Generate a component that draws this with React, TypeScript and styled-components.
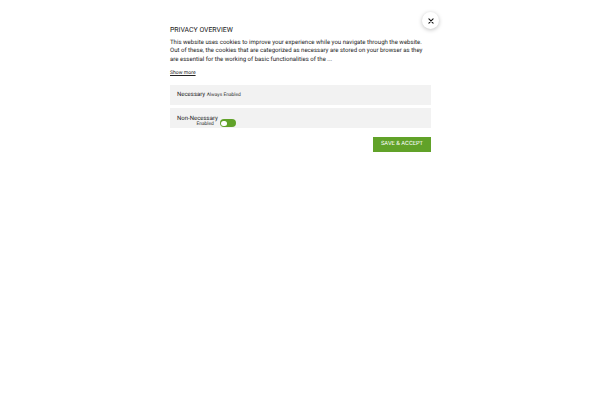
import React from "react";
import styled, { createGlobalStyle } from "styled-components";

const Global = createGlobalStyle`
  html, body { margin: 0; padding: 0; background: #ffffff; }
  body {
    font-family: Roboto, "Liberation Sans", Arial, sans-serif;
    color: #000;
    text-rendering: geometricPrecision;
  }
`;

const Modal = styled.div`
  position: relative;
  width: 261px;
  margin-left: 170px;
  padding-top: 25px;
  display: flex;
  flex-direction: column;
`;

const CloseButton = styled.button`
  position: absolute;
  top: 12px;
  right: -8px;
  width: 17px;
  height: 17px;
  border-radius: 50%;
  border: none;
  background: #ffffff;
  box-shadow: 0 1px 4px rgba(0, 0, 0, 0.25);
  display: flex;
  align-items: center;
  justify-content: center;
  padding: 0;
  cursor: pointer;
`;

const Title = styled.h4`
  margin: 0;
  font-size: 6.9px;
  font-weight: 400;
  line-height: 10px;
  color: #222;
`;

const Body = styled.p`
  margin: 4px 0 0;
  font-size: 6.05px;
  line-height: 8.3px;
  color: #1a1a1a;
`;

const ShowMore = styled.a`
  display: block;
  margin-top: 5px;
  font-size: 5.1px;
  line-height: 8px;
  color: #222;
  text-decoration: underline;
`;

const Row = styled.div<{ $gap?: number }>`
  margin-top: ${(p) => p.$gap ?? 3}px;
  height: 20px;
  background: #f2f2f2;
  display: flex;
  align-items: center;
  padding: 0 7px;
  box-sizing: border-box;
`;

const RowTitle = styled.span`
  font-size: 6px;
  color: #222;
`;

const Small = styled.span`
  font-size: 4.9px;
  color: #333;
  margin-left: 1.5px;
`;

const NonNecWrap = styled.div`
  display: flex;
  align-items: flex-end;
  align-self: flex-end;
  height: 100%;
`;

const Stack = styled.div`
  display: flex;
  flex-direction: column;
  align-items: flex-end;
  padding-bottom: 1px;
`;

const StackTitle = styled.span`
  font-size: 6px;
  line-height: 6px;
  color: #222;
`;

const StackSub = styled.span`
  font-size: 4.9px;
  line-height: 5px;
  color: #333;
  margin-right: 4px;
`;

const Toggle = styled.span`
  width: 16px;
  height: 8px;
  border-radius: 4px;
  background: #61a229;
  margin-left: 2px;
  margin-bottom: 0.5px;
  position: relative;
  display: inline-block;
  &::after {
    content: "";
    position: absolute;
    left: 1.2px;
    top: 1.2px;
    width: 5.6px;
    height: 5.6px;
    border-radius: 50%;
    background: #fff;
  }
`;

const Footer = styled.div`
  display: flex;
  justify-content: flex-end;
  margin-top: 9px;
`;

const SaveButton = styled.button`
  width: 58px;
  height: 15px;
  border: none;
  background: #61a229;
  color: #ffffff;
  font-family: inherit;
  font-size: 5.8px;
  padding: 0;
  text-rendering: geometricPrecision;
`;

export default function App() {
  return (
    <>
      <Global />
      <Modal>
        <CloseButton aria-label="close">
          <svg width="6" height="6" viewBox="0 0 10 10">
            <path d="M1.5 1.5 L8.5 8.5 M8.5 1.5 L1.5 8.5" stroke="#111" strokeWidth="1.8" strokeLinecap="round" />
          </svg>
        </CloseButton>
        <Title>PRIVACY OVERVIEW</Title>
        <Body>
          This website uses cookies to improve your experience while you navigate through the website. Out of these, the cookies that are categorized as necessary are stored on your browser as they are essential for the working of basic functionalities of the ...
        </Body>
        <ShowMore>Show more</ShowMore>
        <Row $gap={8}>
          <RowTitle>Necessary</RowTitle>
          <Small>Always Enabled</Small>
        </Row>
        <Row $gap={3}>
          <NonNecWrap>
            <Stack>
              <StackTitle>Non-Necessary</StackTitle>
              <StackSub>Enabled</StackSub>
            </Stack>
            <Toggle />
          </NonNecWrap>
        </Row>
        <Footer>
          <SaveButton>SAVE &amp; ACCEPT</SaveButton>
        </Footer>
      </Modal>
    </>
  );
}
